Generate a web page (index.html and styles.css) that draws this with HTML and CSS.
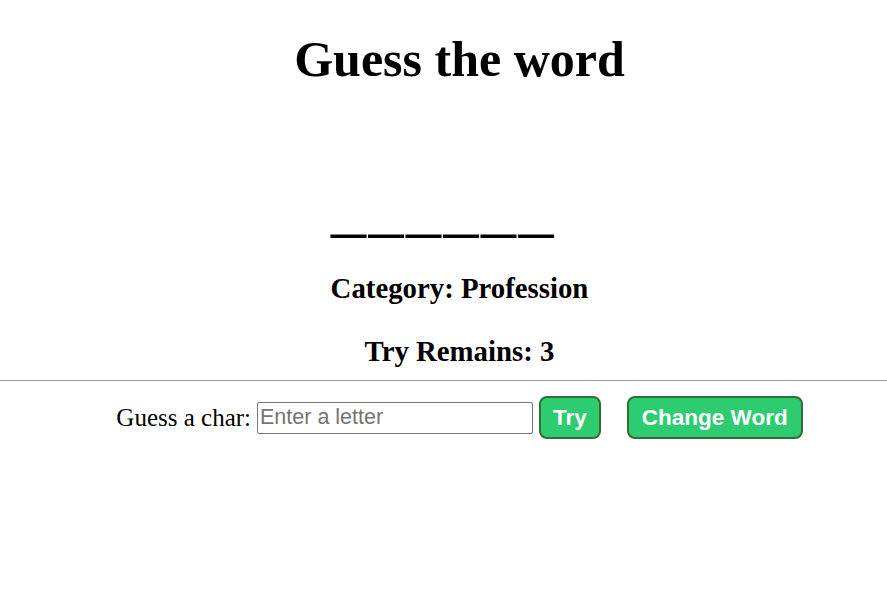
FILE: index.html
```html
<!DOCTYPE html>
<html>
<head>
<meta charset="utf-8">
<title>Guess the word</title>
<link rel="stylesheet" href="styles.css">
</head>
<body>
<div class="game">
  <h1 class="title">Guess the word</h1>
  <div class="word">______</div>
  <h2 class="info">Category: Profession</h2>
  <h2 class="info tries">Try Remains: 3</h2>
</div>
<hr class="divider">
<div class="controls">
  <label class="label" for="guess">Guess a char:</label>
  <input class="input" id="guess" type="text" placeholder="Enter a letter">
  <button class="btn btn-try">Try</button>
  <button class="btn btn-change">Change Word</button>
</div>
</body>
</html>
```
FILE: styles.css
```css
html, body {
  margin: 0;
  padding: 0;
  background: #fff;
}
body {
  font-family: "Liberation Serif", "Times New Roman", serif;
  color: #000;
}
.game {
  padding-left: 32px;
  text-align: center;
}
.title {
  font-size: 50px;
  font-weight: bold;
  margin: 31px 0 0 0;
  line-height: 57px;
}
.word {
  font-size: 70px;
  line-height: 80px;
  letter-spacing: 2.5px;
  margin: 78px 0 0 -32px;
}
.info {
  font-size: 28.8px;
  font-weight: bold;
  margin: 0;
  line-height: 33px;
}
.word + .info {
  margin-top: 26px;
}
.tries {
  margin-top: 30px;
}
.divider {
  margin: 12px 0 0 0;
  border: 0;
  border-top: 1px solid #9a9a9a;
  height: 0;
}
.controls {
  padding-left: 32px;
  display: flex;
  justify-content: center;
  align-items: center;
  margin-top: 15px;
}
.label {
  font-size: 25px;
  margin-right: 6px;
}
.input {
  box-sizing: border-box;
  width: 276px;
  height: 32px;
  border: 1px solid #767676;
  border-radius: 2px;
  font-family: "Liberation Sans", Arial, sans-serif;
  font-size: 21.5px;
  padding: 1px 2px;
  margin: 0 6px 0 0;
}
.input::placeholder {
  color: #757575;
}
.btn {
  box-sizing: border-box;
  height: 43px;
  background: #2ecc71;
  color: #fff;
  border: 2px solid #356b35;
  border-radius: 8px;
  font-family: "Liberation Sans", Arial, sans-serif;
  font-size: 22.5px;
  font-weight: bold;
  padding: 0 12px;
  margin: 0;
}
.btn-change {
  margin-left: 26px;
  padding: 0 13px;
}
```
